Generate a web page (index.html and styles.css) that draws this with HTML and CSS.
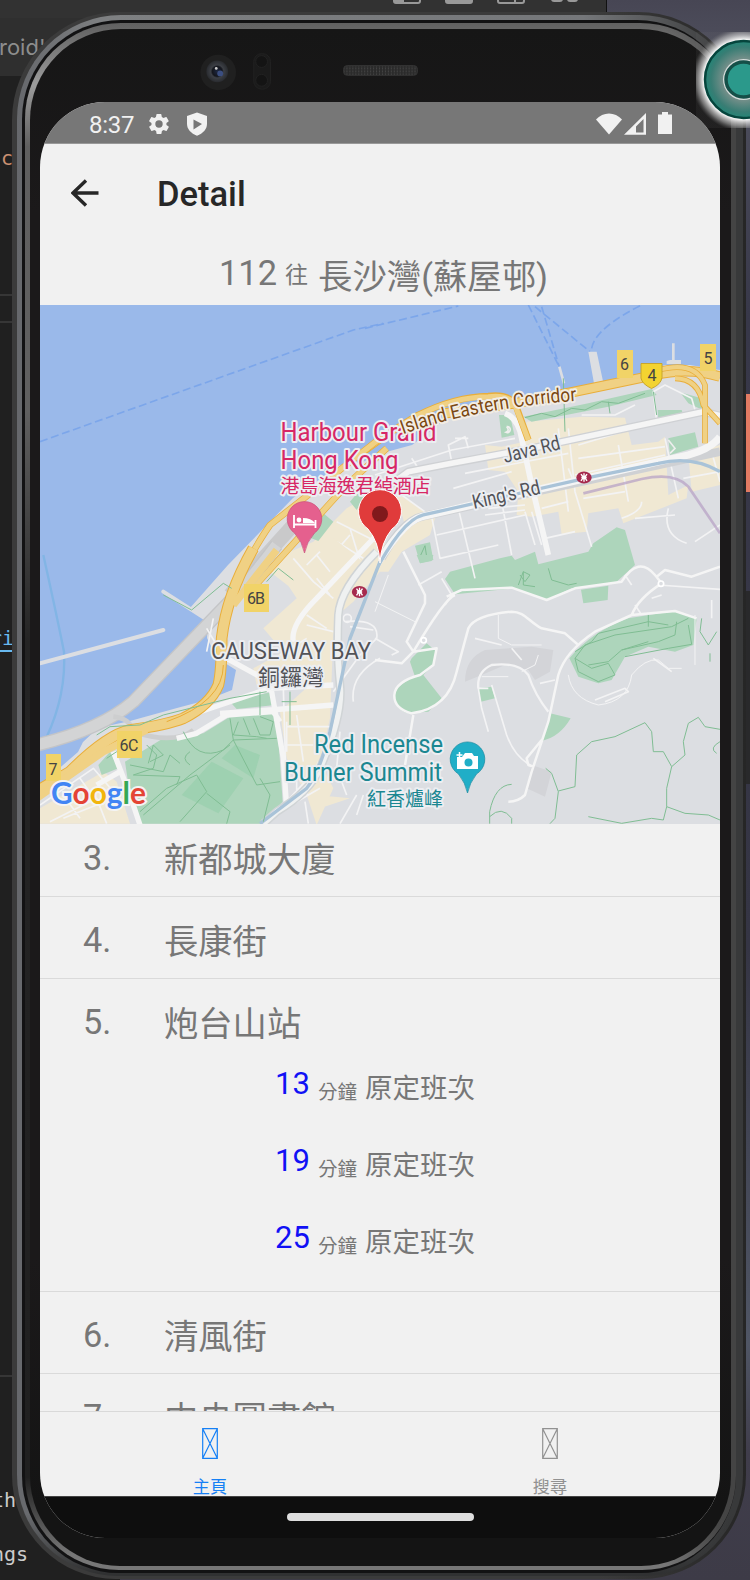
FILE: index.html
```html
<!DOCTYPE html>
<html lang="zh-Hant">
<head>
<meta charset="utf-8">
<title>Detail</title>
<link rel="stylesheet" href="styles.css">
</head>
<body>
<div class="desktop">
  <div class="editor-top"></div><div class="editor-tabs"></div><div class="editor"></div>
  <div class="rule rule-a"></div><div class="rule rule-b"></div><div class="rule rule-c"></div>
  <svg class="toolicons" viewBox="0 0 200 6"><g fill="#323232" stroke="#999" stroke-width="2"><rect x="5" y="-12" width="26" height="15" rx="2"/><rect x="57" y="-12" width="26" height="15" rx="2" fill="#999"/><rect x="109" y="-12" width="26" height="15" rx="2"/><path d="M126-2V3"/><rect x="6" y="-8" width="8" height="10" fill="#999"/><rect x="163" y="-8" width="10" height="9" rx="2" fill="#999"/><rect x="179" y="-8" width="9" height="9" rx="2" fill="#999"/></g></svg>
  <div class="frag tab">roid'</div><div class="frag nc">nc</div><div class="frag ri">ri</div><div class="frag th">th</div><div class="frag ngs">ngs</div>
  <div class="side-orange"></div><div class="side-dark"></div>

  <div class="shell s1"><div class="shell s2"><div class="shell s3"><div class="shell s4"><div class="shell s5">
    <svg class="sensors" viewBox="0 0 680 74">
      <defs>
        <radialGradient id="lens"><stop offset="0" stop-color="#1e2740"/><stop offset=".45" stop-color="#14161d"/><stop offset=".6" stop-color="#3c3f45"/><stop offset="1" stop-color="#292b2f"/></radialGradient>
        <pattern id="mesh" width="3" height="3" patternUnits="userSpaceOnUse"><rect width="3" height="3" fill="#2b2b2b"/><rect width="1" height="2" fill="#444"/></pattern>
      </defs>
      <circle cx="176" cy="44" r="18" fill="#202020"/><circle cx="175" cy="43" r="11" fill="url(#lens)"/><circle cx="178" cy="45" r="3" fill="#3b4e80"/><circle cx="174" cy="40" r="1.4" fill="#ccc"/>
      <rect x="212" y="25" width="17" height="36" rx="8" fill="#1b1b1b" stroke="#222"/><circle cx="220" cy="33" r="6" fill="#141414" stroke="#222"/><circle cx="220" cy="52" r="6" fill="#141414" stroke="#222"/>
      <rect x="303" y="37" width="75" height="10" rx="4" fill="url(#mesh)" stroke="#333"/>
    </svg>
    <div class="screen">
      <div class="status">
        <span class="clock">8:37</span>
        <svg class="gear" viewBox="0 0 24 24"><path fill="#f1f1f1" d="M19.4 13a7.500 7.500 0 0 0 0-2l2.100-1.600a.5.5 0 0 0 .1-.7l-2-3.400a.5.5 0 0 0-.6-.2l-2.500 1a7.300 7.300 0 0 0-1.700-1l-.4-2.600a.5.5 0 0 0-.5-.4h-4a.5.5 0 0 0-.5.4L9 5.100a7.700 7.700 0 0 0-1.700 1l-2.500-1a.5.5 0 0 0-.6.2l-2 3.500a.5.5 0 0 0 .1.6L4.500 11a7.900 7.900 0 0 0 0 2l-2.100 1.600a.5.5 0 0 0-.1.7l2 3.400c.1.2.4.3.6.2l2.500-1a7.300 7.300 0 0 0 1.700 1l.4 2.600c0 .2.200.4.500.4h4c.2 0 .4-.2.500-.4l.4-2.600a7.700 7.700 0 0 0 1.700-1l2.500 1c.2.1.500 0 .6-.2l2-3.500a.5.5 0 0 0-.1-.6zM12 15.700a3.700 3.700 0 1 1 0-7.400 3.700 3.700 0 0 1 0 7.400z"/></svg>
        <svg class="shield" viewBox="0 0 20 24"><path fill="#f1f1f1" d="M10 .5 20 4v8c0 5-4 9.500-10 11.700C4 21.500 0 17 0 12V4z"/><path fill="#777" d="M6.500 7.500v10L15 12z"/></svg>
        <svg class="signals" viewBox="0 0 78 24"><g fill="#f1f1f1"><path d="M0 7.500C7-.6 19-.6 26 7.500L13 22.500z"/><path fill-rule="evenodd" d="M28 22.700 50 1v21.700zM40 20.500h7.500V7L40 14.500z"/><path d="M66 0h6v2.500h4V22H62V2.500h4z"/></g></svg>
      </div>
      <div class="header">
        <svg class="back" viewBox="0 0 28 28"><path d="M27.500 14H2M15 1.500 2 14l13 12.500" fill="none" stroke="#272727" stroke-width="3.4"/></svg>
        <span>Detail</span>
      </div>
      <div class="route"><span class="num">112</span><span class="to">往</span><span class="dest">長沙灣(蘇屋邨)</span></div>
      <svg class="map" viewBox="40 305 680 519">
        <defs>
          <path id="corridor" d="M84 418C230 365 400 332 614 317"/>
          <g id="mtr"><ellipse rx="23" ry="18" fill="#a62a4e"/><path d="M0-13V13M-9-10Q0 7 9-10M-9 10Q0-7 9 10M-8 0H8" fill="none" stroke="#fff" stroke-width="4"/></g>
        </defs>
        <rect x="40" y="305" width="680" height="519" fill="#9ab9ea"/>
        <path class="land" d="M40 785 78 752 83 742 98 728 130 721 177 708 207 700 232 690 236 670 217 658 207 638 208 622 190 608 228 565 293 498 340 465 363 462 375 455 412 445 442 422 458 412 485 398 522 405 588 390 628 378 665 365 690 365 720 370V824H40Z"/>
        <g transform="translate(375 295) scale(.33333)">
          <g class="block">
            <path d="M455 380 620 365 750 368 770 450 850 440 870 425 880 600 940 570 935 610 745 685 730 640 640 655 635 710 560 718 550 650 470 665 425 660 430 590 390 530 340 525 330 450 380 455 450 440Z"/>
            <path d="M940 480 1035 450V570L950 590ZM60 590 180 670 165 720 80 770 40 830 0 830 15 760 90 690Z"/>
          </g>
          <g class="park">
            <path d="M445 365 640 325 830 282 845 300 700 335 470 380ZM372 360 405 360 418 420 380 428ZM915 292 980 310 983 345 940 325ZM880 430 960 412 970 455 885 480ZM848 345 920 345 925 360 850 372ZM120 752 165 742 175 795 135 805Z"/>
            <path d="M375 790 410 782 420 795 480 770 490 808 640 770 655 745 725 697 750 705 780 810 720 865 590 880 515 915 420 880 240 898 210 852 225 830Z"/>
          </g>
          <g class="ferry"><path d="M-30 100 250 33M460 30 550 210M500 35 560 240M480 35 645 170M650 160Q660 100 800 30"/></g>
          <path d="M640 170H665L695 310H665ZM885 195H918V207H875V198Z" fill="#dcdee2"/><path d="M895 145V200M553 215 567 265" stroke="#dcdee2" stroke-width="8"/>
          <g class="minor">
            <path d="M0 540 230 465 420 430M230 500 220 450 270 425 280 460M270 535 580 475M580 400 600 590 650 755M730 450 760 620M600 540 870 480M610 450 760 405M550 400 580 650M625 610 750 590M700 550 750 540M500 640 580 620M80 600 170 665 195 790 370 750M185 720 450 660M250 640 300 850M380 620 410 780M450 650 480 750M340 640 450 630M510 730 600 710M470 650 500 750M620 360 720 360 780 330M880 640Q860 720 935 745M960 740 1035 690M780 670 900 660M800 620Q800 650 740 670M870 430 910 610M1010 470 1035 560M925 550 1035 530M110 490 130 520M240 430 280 430M235 580 410 530M330 660 450 645"/>
            <path d="M60 600Q90 580 140 560M845 380 835 290 870 270 950 310 960 345M610 490 870 455M580 520 600 570"/>
          </g>
          <g class="case"><path d="M0 605 100 530 230 505 460 462 985 350 1035 362M20 790Q80 680 140 665L1035 470" stroke-width="25"/></g>
          <g class="major"><path d="M-90 670 100 530 230 505 460 462 985 350 1035 362" stroke-width="17"/><path d="M-20 850Q80 680 140 665L720 530 940 480Q1010 460 1035 425" stroke-width="22"/><path d="M390 355Q430 370 440 430L470 570 520 780" stroke-width="17"/></g>
          <path d="M-10 850Q80 675 145 660L640 548 850 505Q950 480 1035 530" fill="none" stroke="#a9c3d8" stroke-width="10"/>
          <path d="M625 595 800 552Q900 530 940 575L1035 715" fill="none" stroke="#b8a3c5" stroke-width="8" opacity=".75"/>
          <g class="hwcase"><path class="slim" d="M-40 475Q60 400 130 360 240 305 340 303 400 295 422 330L460 435"/><path class="wide" d="M210 355 420 325 600 290 840 240Q940 215 1035 245"/></g>
          <g class="hw"><path d="M-40 475Q60 400 130 360 240 305 340 305 400 297 420 330L460 435" stroke-width="15"/><path d="M210 355 420 325 600 290 840 240Q940 215 1035 245" stroke-width="25"/><path d="M850 225Q960 195 990 270L990 445M900 250Q970 250 985 330L1035 385" stroke="#e9ae3a" stroke-width="17"/><path d="M850 225Q960 195 990 270L990 445M900 250Q970 250 985 330L1035 385" stroke-width="12"/></g>
          <g class="trail"><path d="M450 368 500 355 540 365 590 340 630 345 680 320 730 325 810 295M565 250 570 410M700 320 705 355M835 290 845 360M135 785 150 752 155 785Z"/></g>
          <path d="M395 395a9 9 0 1 1-2 17q12-5 2-17M880 435 900 460 885 475" fill="none" stroke="#eee" stroke-width="5"/>
        </g>
        <g transform="translate(30 295) scale(.33333)">
          <g class="block"><path d="M950 640 1020 600 1050 830 970 920 900 980 810 900 720 830 780 770 850 740Z"/></g>
          <path class="park" d="M875 650 910 680 865 738 820 720ZM960 620 985 590 1000 610 980 645Z"/>
          <path class="ferry" d="M30 440 970 105 1060 85"/>
          <g class="minor"><path d="M920 680 1040 740M890 800 960 720M960 700 1000 830M920 740 1000 790M840 780 880 830"/></g>
          <path d="M600 900 790 690" stroke="#c9c9ca" stroke-width="42"/>
          <g class="hwcase thin"><path d="M590 920Q670 760 720 690L1050 430M650 900Q840 690 950 570L1070 460"/></g>
          <g class="hw" stroke-width="16"><path d="M590 920Q670 760 720 690L1050 430M650 900Q840 690 950 570L1070 460"/></g>
        </g>
        <g transform="translate(30 555) scale(.33333)">
          <g class="block"><path d="M760 20 900-60 1010 30 940 110 910 240 900 490 870 620 910 700 860 810 830 720 770 610 750 470 850 380 680 390 670 340 760 290 700 220 800 130 740 40ZM30 760 220 650 260 680 300 806H30ZM860 720 960 730 870 760Z"/></g>
          <g class="park">
            <path d="M600 440 720 412 735 450 620 462ZM285 620 400 550 520 535 600 485 740 475 758 740 690 806H335L300 720ZM205 630 240 590 265 640 215 660Z"/>
          </g>
          <path d="M545 620 640 670 565 775 455 720ZM575 610 615 570 690 600 670 670Z" fill="#9acfae" opacity=".75"/>
          <path d="M40 0Q80 180 102 290 110 440 30 585" fill="none" stroke="#82b5e5" stroke-width="7"/>
          <path d="M30 325 400 225M400 110 525 190" fill="none" stroke="#dcdee2" stroke-width="12" stroke-linecap="round"/>
          <path d="M20 570Q210 525 310 440L560 180Q650 90 740-30" fill="none" stroke="#c4c5c7" stroke-width="41"/><path d="M20 570Q210 525 310 440L560 180Q650 90 740-30" fill="none" stroke="#d3d4d5" stroke-width="33"/><path d="M250 485Q300 490 310 530 430 570 490 525" fill="none" stroke="#cdcecf" stroke-width="14"/>
          <g class="minor">
            <path d="M790 10 850 80 910 130M830 30 870-10M860 0 900 50M860 70 900 120M830 210 910 230M830 180 890 220M750 300 830 250M760 400 770 740M800 480 820 620M770 515H910M770 570H850M800 620V740L870 700M825 740 835 806M770 740 890 610M945 200Q1050 190 1040 250L990 300 910 410M970 440Q960 360 1050 310M930 530 920 640 950 720M980 720 930 806M30 750 190 640 250 710M60 800 200 730 230 806M100 720 150 790M150 670 200 740M200 700 290 740M100 790 250 730M530 220 560 270M550 190 530 290M940 190a12 12 0 1 0 24 0 12 12 0 1 0-24 0M960 215 1030 225M770 500V590M865 620 830 720M1000 720 980 780"/>
          </g>
          <g class="major" stroke-width="16"><path d="M1040-60 860 130Q780 210 790 260M590 310 690 365 725 410 760 610 770 760M570 475 720 465 910 450M510 470 720 400 910 390M250 590 300 720 330 810M200 690 270 650M440 550 500 535 590 480 730 470Q750 500 750 500"/></g>
          <path d="M1040-10Q930 100 925 180 920 300 930 390T870 640Q840 710 740 770L700 806" fill="none" stroke="#d0d4d6" stroke-width="26"/><path d="M1040-10Q930 100 925 180 920 300 930 390T870 640Q840 710 740 770L700 806" fill="none" stroke="#eff1f1" stroke-width="17"/>
          <path d="M1050 20 960 250 900 530Q870 650 830 700L690 806" fill="none" stroke="#a9c3d8" stroke-width="10"/>
          <g class="hwcase big"><path d="M670-20Q590 120 575 250 575 350 565 390 540 450 460 490 410 510 300 525 230 540 120 650L10 715"/></g>
          <g class="hw"><path d="M670-20Q590 120 575 250 575 350 565 390 540 450 460 490 410 510 300 525 230 540 120 650L10 715" stroke-width="29"/><path d="M740-15 610 150M350 525 220 590 20 730" stroke-width="22"/><path d="M580 330Q580 440 410 500" stroke="#e9ac35" stroke-width="3"/></g>
          <g class="trail"><path d="M400 120 485 165 580 85 605 100M710 80 745 40 790 75M200 540 240 515 330 510 400 480 600 430 710 410M230 610 260 590M600 490 610 555 740 550M625 500 610 540 680 545 710 550M640 490 660 540M670 490 690 540 720 540 730 500 690 485M460 530Q500 620 580 585L610 555M600 570 480 660 340 780M350 570 380 600 370 640 310 660M300 630 400 650 420 600 450 625M310 660 450 665 440 690M355 625 370 570 400 600 360 620M480 590Q450 610 480 630M780 410V510M755 440H800M690 410V480M530 715 600 770 590 806M500 660 530 710 450 800M330 770 410 700 500 660M610 555 680 690 750 680M690 670 720 720 700 800"/></g>
        </g>
        <g transform="translate(375 555) scale(.33333)">
          <path d="M270 380Q270 310 330 285L470 275 535 285 525 350 480 375 460 345 390 330 320 360ZM470 630 530 650 510 725 455 700Z" fill="#d3d4d8"/>
          <g class="park">
            <path d="M110 310 155 265 185 290 175 330 145 360 200 430 160 470 100 475Q55 460 58 420 65 390 120 365L105 320ZM618 104 700 92 698 135 625 145ZM583 310Q650 230 760 190L900 168 965 188 955 270 900 290 820 275 750 305 710 375 670 385 610 365ZM525 475 587 490Q555 545 503 557ZM310 400 350 395 360 430 318 440ZM125 0 175 0 170 18 135 25Z"/>
          </g>
          <g class="minor">
            <path d="M300 250 380 270M410 280 440 315M350 390 395 540Q420 610 475 635M340 400 310 400 320 460 340 530M495 385 540 375M660 435 750 400 760 410 690 440M835 310 890 350M850 90 1035 103M780 150 800 180M750 60 770 90M0 250 70 290 50 300M130 90 200 50M200 70 230 120 210 150M1010 135V190M860 120 830 130"/>
            <path d="M310 400Q305 350 350 330 430 320 460 360 480 420 520 470" stroke-width="7"/>
            <path stroke-width="3" d="M370 180V250L410 270 500 270M490 300 480 330 440 350M320 365 400 365M580 360Q590 430 670 450 760 440 770 360 810 310 850 315L880 340H920M0 140 120 200M0 170 40 60M960 180V330"/>
          </g>
          <g class="main"><path d="M85-10 150 120V145L95 260 115 290 80 325 0 315M240 120Q210 130 115 290L185 280 175 330 135 360Q60 380 58 420T110 475Q220 460 245 350L280 220Q300 180 410 170C450 170 460 200 500 220L570 235 610 270M215 125 260 105 410 98 515 135 600 100 740 80Q790 0 840 60L860 85Q790 130 770 180L660 230Q570 290 550 360L520 500 470 650 450 720Q430 740 400 740M770 180 900 168 965 190M845 65 870 45 950 65 1035 35M500 555 455 610 460 630 475 635M115 480 90 630"/></g>
          <circle cx="146" cy="256" r="8" fill="#dcdee2" stroke="#fff" stroke-width="5"/><circle cx="858" cy="86" r="8" fill="#dcdee2" stroke="#fff" stroke-width="5"/>
          <g class="trail">
            <path d="M344 806V770Q360 690 410 688M344 785Q380 750 410 790V806M512 640 530 655 550 710 540 790 525 806M550 708 600 695 605 600 650 560 720 545 810 503 830 530 835 590 865 590 890 635 930 600 925 560 940 505 970 487 990 515 1035 523M890 635 875 700V755L865 795 830 790 740 805 640 785M875 755 930 775 1000 780 1035 795M1035 560Q1000 580 1025 595M980 190 975 230 1000 270 1025 230M1005 295V320"/>
            <path d="M600 310 650 340 700 325 720 360 670 380 610 350 600 310 630 270 720 240 890 215 940 190M600 290 650 260 670 235 820 200 880 210M640 330 700 320 740 285 850 260 900 240 905 200M740 285 820 260M750 305 880 280 950 268 940 210M820 180V215M520 40 530 75 580 90 605 85M430 90 445 50 465 60 450 80 435 60M445 50V90L480 95"/>
          </g>
        </g>
        <g class="badge">
          <rect x="617" y="350" width="16" height="28"/><rect x="700" y="344" width="16" height="27"/><rect x="244" y="584" width="25" height="28"/><rect x="117" y="731" width="25" height="27"/><rect x="46" y="754" width="15" height="27"/>
          <path d="M641 363.500h21v14q-1 7-10.500 11Q642 384 641 378z" fill="#f3d331" stroke="#c7a52e"/>
        </g>
        <g class="badgetext"><text x="624.500" y="370">6</text><text x="708" y="363.500">5</text><text x="652" y="380.500">4</text><text x="256" y="604" textLength="18">6B</text><text x="129" y="751" textLength="19">6C</text><text x="53" y="775">7</text></g>
        <g transform="translate(584 477.500) scale(.333)"><use href="#mtr"/></g><g transform="translate(359.500 592) scale(.333)"><use href="#mtr"/></g>
        <g class="lbl pink"><text x="280.500" y="441" textLength="156" lengthAdjust="spacingAndGlyphs">Harbour Grand</text><text x="280.500" y="469" textLength="118" lengthAdjust="spacingAndGlyphs">Hong Kong</text><text x="280.500" y="493" class="cj" textLength="150">港島海逸君綽酒店</text></g>
        <g transform="translate(375 295) scale(.33333)"><text class="corr" textLength="532" lengthAdjust="spacingAndGlyphs"><textPath href="#corridor" textLength="532" lengthAdjust="spacingAndGlyphs">Island Eastern Corridor</textPath></text></g>
        <g class="lbl grey"><text transform="translate(505 463) rotate(-14)" class="st" textLength="58" lengthAdjust="spacingAndGlyphs">Java Rd</text><text transform="translate(474 509) rotate(-13)" class="st" textLength="69" lengthAdjust="spacingAndGlyphs">King's Rd</text><text x="211" y="659" class="cb" textLength="160" lengthAdjust="spacingAndGlyphs">CAUSEWAY BAY</text><text x="258" y="685" class="cbj" textLength="66">銅鑼灣</text></g>
        <g class="lbl teal"><text x="314" y="753" textLength="129" lengthAdjust="spacingAndGlyphs">Red Incense</text><text x="284" y="781" textLength="158" lengthAdjust="spacingAndGlyphs">Burner Summit</text><text x="367" y="806" class="cj" textLength="76">紅香爐峰</text></g>
        <path d="M304.500 553q-2-11-10-20a17.300 17.300 0 1 1 20 0q-8 9-10 20z" fill="#e5608e" stroke="#c94f7b" stroke-width=".7"/>
        <path d="M294 515v13M315.500 520v8M294 524.500h21" fill="none" stroke="#fff" stroke-width="1.800"/><circle cx="299" cy="520" r="2.400" fill="#fff"/><path d="M303 523v-5q8 0 12 5z" fill="#fff"/>
        <path d="M380 563q-1-21-12-34a21.500 21.500 0 1 1 24 0q-11 13-12 34z" fill="#e03b3b" stroke="#fff" stroke-width="1"/><circle cx="380" cy="514" r="8" fill="#80191c"/>
        <path d="M467.500 793q-2-10-9-19a17.300 17.300 0 1 1 18 0q-7 9-9 19z" fill="#20aec7" stroke="#1a8ba0" stroke-width=".7"/><path d="M457 757h5l3-4h7l2 3h4v13h-21z" fill="#fff"/><circle cx="468.500" cy="762.500" r="4" fill="#20aec7"/><path d="M459.500 752v6M456.500 755h6" stroke="#fff" stroke-width="1.500"/>
        <text class="google" x="51" y="804" textLength="95" lengthAdjust="spacingAndGlyphs"><tspan fill="#4285f4">G</tspan><tspan fill="#e44435">o</tspan><tspan fill="#f2b50d">o</tspan><tspan fill="#4285f4">g</tspan><tspan fill="#34a853">l</tspan><tspan fill="#e44435">e</tspan></text>
      </svg>
      <div class="stops">
        <div class="stop first"><span>3.</span><b>新都城大廈</b></div>
        <div class="stop"><span>4.</span><b>長康街</b></div>
        <div class="stop open"><span>5.</span><b>炮台山站</b>
          <div class="times">
            <div class="time"><i>13</i><small>分鐘</small><em>原定班次</em></div>
            <div class="time"><i>19</i><small>分鐘</small><em>原定班次</em></div>
            <div class="time"><i>25</i><small>分鐘</small><em>原定班次</em></div>
          </div>
        </div>
        <div class="stop"><span>6.</span><b>清風街</b></div>
        <div class="stop last"><span>7.</span><b>中央圖書館</b></div>
      </div>
      <div class="tabs">
        <div class="tabitem active"><svg viewBox="0 0 16 31"><path d="M.7.7h14.600v29.600H.7zL15.300 30.300M15.300.7.7 30.300" fill="none" stroke="currentColor" stroke-width="1.200"/></svg><span>主頁</span></div>
        <div class="tabitem"><svg viewBox="0 0 16 31"><path d="M.7.7h14.600v29.600H.7zL15.300 30.300M15.300.7.7 30.300" fill="none" stroke="currentColor" stroke-width="1.200"/></svg><span>搜尋</span></div>
      </div>
      <div class="gesture"><div class="pill"></div></div>
    </div>
  </div></div></div></div></div>
  <svg class="touch" viewBox="696 32 54 96"><defs><radialGradient id="glow" gradientUnits="userSpaceOnUse" cx="743.500" cy="79.500" r="52"><stop offset=".76" stop-color="#fff"/><stop offset=".9" stop-color="#bbb" stop-opacity=".55"/><stop offset="1" stop-color="#777" stop-opacity=".1"/></radialGradient><radialGradient id="disc" gradientUnits="userSpaceOnUse" cx="743.500" cy="79.500" r="38"><stop offset=".52" stop-color="#78908b"/><stop offset=".85" stop-color="#397d74"/><stop offset="1" stop-color="#258476"/></radialGradient></defs><rect x="696" y="32" width="54" height="96" fill="url(#glow)"/><circle cx="743.500" cy="79.500" r="38.500" fill="url(#disc)" stroke="#06453d" stroke-width="2.500"/><circle cx="743.500" cy="79.500" r="20.500" fill="#d5dddb"/><circle cx="743.500" cy="79.500" r="17.500" fill="#2b998b" stroke="#154f48" stroke-width="3.500"/></svg>
</div>
</body>
</html>
```
FILE: styles.css
```css
* { box-sizing: border-box; }
body { margin: 0; font-family: Roboto, "Noto Sans CJK TC", sans-serif; }
.desktop { position: relative; width: 750px; height: 1580px; overflow: hidden; background: linear-gradient(#474654, #50515f 4%, #383849 20%, #353544 60%, #505665 85%, #403d4b 92%, #3d3b47); }
.editor-top, .editor-tabs, .editor, .rule, .frag, .side-orange, .side-dark, .toolicons, .touch { position: absolute; }
.editor-top { left: 0; top: 0; width: 607px; height: 18px; background: #323232; border-right: 1px solid #111; }
.editor-tabs { left: 0; top: 18px; width: 120px; height: 58px; background: #2f2f2f; }
.editor { left: 0; top: 76px; width: 120px; height: 1504px; background: #202020; }
.rule { left: 0; width: 14px; height: 2px; background: #363636; }
.rule-a { top: 294px; } .rule-b { top: 321px; } .rule-c { top: 1375px; }
.toolicons { left: 389px; top: 0; width: 200px; height: 6px; }
.frag { font: 20px/26px "DejaVu Sans Mono", monospace; color: #ccc; white-space: nowrap; }
.tab { left: -1px; top: 34px; font: 22px/26px Inter, sans-serif; color: #8d8d8d; }
.nc { left: -11px; top: 145px; color: #cb9172; }
.ri { left: -10px; top: 625px; height: 27px; color: #68b9ef; border-bottom: 2px solid #68b9ef; }
.th { left: -8px; top: 1487px; }
.ngs { left: -8px; top: 1541px; }
.side-orange { right: 0; top: 394px; width: 5px; height: 98px; background: #e37b63; }
.side-dark { right: 0; top: 591px; width: 5px; height: 193px; background: #29292b; }
.s1 { position: absolute; left: 12px; top: 12px; width: 734px; height: 1567px; padding: 3px 3px 3px 5px; border-radius: 108px 108px 104px 104px; background: linear-gradient(90deg, #3b3b3b 80%, #262626); }
.s2 { height: 100%; padding: 5px 7px 3px 5px; border-radius: 104px 104px 101px 101px; background: linear-gradient(transparent 96%, #303132 99.800%), linear-gradient(90deg, #66686c, #7e8082 12%, #75777a 78%, #38393a 98%); }
.s3 { height: 100%; padding: 3px 0 3px 3px; border-radius: 99px 99px 97px 97px; background: #121213; }
.s4 { height: 100%; padding: 6px 5px 4px 5px; border-radius: 96px 96px 94px 94px; background: linear-gradient(90deg, transparent 90%, #444 99%), linear-gradient(#606060, #9c9c9c 4%, #5f5f5f 8%, #606060 25%, #242424 40%, #202020 94%, #777 99%); }
.s5 { height: 100%; padding-left: 10px; border-radius: 91px 91px 90px 90px; background: linear-gradient(#161616, #1b191a 12%, #1b191a 80%, #141414 96%); }
.sensors { display: block; width: 680px; height: 73px; }
.screen { width: 680px; height: 1436px; border-radius: 65px; overflow: hidden; background: #f1f1f1; color: #777; display: flex; flex-direction: column; }
.status { height: 42px; flex: none; background: #777; display: flex; align-items: center; padding: 2px 47px 0 49px; color: #f1f1f1; border-bottom: 1px solid #999; }
.clock { width: 58px; font-size: 24px; padding-top: 2px; letter-spacing: -.3px; }
.gear { width: 24px; height: 24px; }
.shield { width: 20px; height: 24px; margin-left: 16px; }
.signals { width: 78px; height: 24px; margin-left: auto; margin-right: -1px; }
.header { height: 97px; flex: none; display: flex; align-items: center; padding: 2px 0 0 31px; font-size: 34.500px; font-weight: 500; color: #272727; }
.back { width: 28px; height: 28px; margin: -2px 58px 0 0; }
.route { height: 64px; flex: none; display: flex; align-items: center; padding-left: 179px; font-size: 34.400px; line-height: 40px; white-space: nowrap; }
.route .num { padding-top: 0; }
.route .to { font-size: 23px; margin: 0 10px 0 8px; padding-top: 5px; }
.route .dest { padding-top: 7px; }
.map { display: block; width: 680px; height: 519px; flex: none; }
.stops { height: 588px; flex: none; overflow: hidden; border-bottom: 1px solid #d9d9d9; }
.stop { height: 82px; border-bottom: 1px solid #dadada; display: grid; grid-template-columns: 81px 1fr; padding: 20px 0 0 43px; font-size: 34.300px; line-height: 46px; }
.first { margin-top: -9px; }
.stop b { font-weight: 400; padding-top: 2px; }
.open { height: 313px; grid-template-rows: 46px auto; }
.times { grid-column: 1 / 3; padding: 0 0 0 192px; margin-top: -3px; }
.time { height: 77px; display: flex; align-items: flex-start; line-height: 40px; padding-top: 22px; }
.time i { font-style: normal; font-size: 31px; color: #1111f5; width: 43px; }
.time small { font-size: 19.500px; padding-top: 9px; width: 47px; }
.time em { font-style: normal; font-size: 27.500px; padding-top: 5px; }
.tabs { height: 84px; flex: none; display: flex; }
.tabitem { flex: 1; display: flex; flex-direction: column; align-items: center; padding-top: 16px; color: #929292; font-size: 17.200px; line-height: 20px; }
.tabitem svg { width: 16px; height: 31px; flex: none; }
.tabitem span { margin-top: 18px; }
.active { color: #1680f5; }
.gesture { height: 42px; background: #0e0e0e; border-top: 1px solid #444; display: flex; justify-content: center; padding-top: 16px; }
.pill { width: 187px; height: 8px; border-radius: 4px; background: #dedede; }
.touch { left: 696px; top: 32px; width: 54px; height: 96px; }
.land { fill: #dcdee2; }
.block { fill: #f0e8d3; }
.park { fill: #add5bb; }
.ferry { fill: none; stroke: #7ca6ea; stroke-width: 5; stroke-dasharray: 24 11; }
.minor { fill: none; stroke: #f3f3f4; stroke-width: 5; stroke-linejoin: round; }
.main { fill: none; stroke: #f5f5f5; stroke-width: 7.500; stroke-linejoin: round; }
.major { fill: none; stroke: #f5f5f5; stroke-linejoin: round; }
.case { fill: none; stroke: #cfd1d4; }
.hw { fill: none; stroke: #f0d184; stroke-linejoin: round; }
.hwcase { fill: none; stroke: #e9ae3a; }
.hwcase .slim { stroke-width: 20; }
.hwcase .wide { stroke-width: 31; }
.hwcase.thin { stroke-width: 20; }
.hwcase.big { stroke-width: 35; }
.trail { fill: none; stroke: #80bd93; stroke-width: 3; stroke-linejoin: round; }
.badge { fill: #f1d367; }
.badgetext { font-size: 16px; fill: #444; text-anchor: middle; }
.lbl { font-size: 25px; stroke: #eceef2; stroke-width: 4px; paint-order: stroke; stroke-linejoin: round; }
.pink { fill: #d72765; }
.pink .cj, .teal .cj { font-size: 19px; }
.grey { fill: #525358; }
.teal { fill: #1b8791; }
.st { font-size: 20px; }
.cb { font-size: 23px; }
.cbj { font-size: 22px; }
.corr { font-size: 59px; fill: #7b4812; stroke: #f2ede4; stroke-width: 12px; paint-order: stroke; stroke-linejoin: round; }
.google { font: 500 30px Lato, sans-serif; font-weight: 700; stroke: #f4f4f4; stroke-width: 4px; paint-order: stroke; }
```
